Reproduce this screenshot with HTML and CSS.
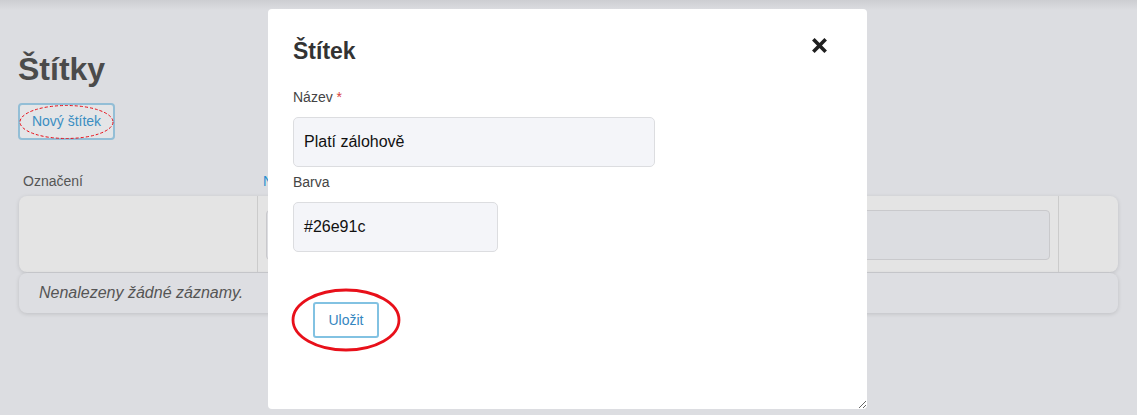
FILE: index.html
```html
<!DOCTYPE html>
<html lang="cs">
<head>
<meta charset="utf-8">
<title>Štítky</title>
<link rel="stylesheet" href="styles.css">
</head>
<body>
<div class="page">
  <h1 class="page-title">Štítky</h1>
  <div class="actions">
    <button class="btn-new">Nový štítek</button>
    <svg class="mark-dashed" width="95" height="36" viewBox="0 0 95 36"><ellipse cx="47.5" cy="18" rx="46.5" ry="16.5" fill="none" stroke="#e8101a" stroke-width="1" stroke-dasharray="3 2"/></svg>
  </div>
  <div class="table">
    <div class="thead">
      <div class="th th-first">Označení</div>
      <div class="th th-link">Název</div>
      <div class="th"></div>
    </div>
    <div class="row filter-row">
      <div class="cell"></div>
      <div class="cell cell-mid"><div class="filter-input"></div></div>
      <div class="cell cell-last"></div>
    </div>
    <div class="row empty-row">Nenalezeny žádné záznamy.</div>
  </div>
</div>

<div class="modal">
  <div class="modal-head">
    <h2 class="modal-title">Štítek</h2>
    <svg class="close" width="15" height="15" viewBox="0 0 15 15"><path d="M2.6 2.6 L12.4 12.4 M12.4 2.6 L2.6 12.4" stroke="#1f1f1f" stroke-width="3.6" stroke-linecap="square"/></svg>
  </div>
  <label class="field-label">Název <span class="req">*</span></label>
  <div class="input input-wide">Platí zálohově</div>
  <label class="field-label label-second">Barva</label>
  <div class="input input-narrow">#26e91c</div>
  <div class="save-wrap">
    <button class="btn-save">Uložit</button>
    <svg class="mark-solid" width="110" height="64" viewBox="0 0 110 64"><ellipse cx="55" cy="32" rx="53" ry="30" fill="none" stroke="#e8101a" stroke-width="2.8"/></svg>
  </div>
</div>
</body>
</html>
```

FILE: styles.css
```css
* { box-sizing: border-box; }

html, body {
  margin: 0;
  height: 100%;
}

body {
  font-family: "Liberation Sans", Arial, sans-serif;
  background: linear-gradient(to bottom, #cdced2 0, #dcdde1 10px) no-repeat, #dcdde1;
  color: #555;
  overflow: hidden;
}

.page {
  padding: 51px 19px 0 18px;
}

.page-title {
  margin: 0;
  font-size: 32px;
  line-height: 36px;
  font-weight: bold;
  color: #4b4b4b;
}

.actions {
  position: relative;
  margin-top: 16px;
  width: 97px;
}

.btn-new {
  display: block;
  font-family: inherit;
  font-size: 14px;
  line-height: 17px;
  padding: 8px 0;
  width: 97px;
  height: 37px;
  white-space: nowrap;
  text-align: center;
  border: 2px solid #93bed6;
  border-radius: 4px;
  background: #e4e5e7;
  color: #3b8ec2;
}

.mark-dashed {
  position: absolute;
  left: 1px;
  top: 1px;
}

.table {
  margin-top: 33px;
  margin-left: 1px;
}

.thead,
.filter-row {
  display: grid;
  grid-template-columns: 238px 1fr 60px;
}

.th {
  font-size: 14px;
  line-height: 16px;
  color: #555;
  border-left: 1px solid transparent;
  white-space: nowrap;
  overflow: hidden;
}

.th-first {
  padding-left: 4px;
  border-left: 0;
}

.th-link {
  padding-left: 5px;
  color: #2a8fd0;
}

.thead {
  padding-bottom: 7px;
}

.row {
  border-radius: 8px;
  box-shadow: 0 1px 4px rgba(0, 0, 0, 0.13);
}

.filter-row {
  height: 76px;
  background: #e4e4e4;
}

.cell-mid {
  border-left: 1px solid #cbcbcb;
  padding: 14px 8px 12px;
}

.cell-last {
  border-left: 1px solid #cbcbcb;
}

.filter-input {
  height: 50px;
  background: #dcdde1;
  border: 1px solid #c9c9cc;
  border-radius: 4px;
}

.empty-row {
  margin-top: 1px;
  height: 40px;
  background: #dddee2;
  padding-left: 20px;
  font-size: 16px;
  font-style: italic;
  line-height: 40px;
  color: #555;
}

/* modal */
.modal {
  position: absolute;
  left: 268px;
  top: 9px;
  width: 599px;
  height: 400px;
  background: #fff;
  border-radius: 4px;
  padding: 28px 40px 0 25px;
  resize: both;
  overflow: auto;
}

.modal-head {
  display: flex;
  justify-content: space-between;
  align-items: flex-start;
}

.modal-title {
  margin: 0;
  font-size: 23px;
  line-height: 28px;
  font-weight: bold;
  color: #333;
}

.close {
  display: block;
  margin-top: 1px;
}

.field-label {
  display: block;
  margin-top: 24px;
  font-size: 14px;
  line-height: 16px;
  color: #444;
}

.label-second {
  margin-top: 7px;
}

.req {
  color: #d9403a;
}

.input {
  margin-top: 12px;
  height: 50px;
  border: 1px solid #dcdde0;
  border-radius: 5px;
  background: #f4f5f9;
  padding: 0 10px;
  font-size: 16px;
  line-height: 48px;
  color: #111;
}

.input-wide { width: 362px; }
.input-narrow { width: 205px; }

.save-wrap {
  position: relative;
  margin-top: 50px;
  margin-left: 20px;
  width: 66px;
}

.btn-save {
  display: block;
  font-family: inherit;
  font-size: 14px;
  line-height: 16px;
  padding: 8px 0;
  width: 66px;
  height: 36px;
  white-space: nowrap;
  text-align: center;
  border: 2px solid #82c2e2;
  border-radius: 3px;
  background: #fff;
  color: #3586c0;
}

.mark-solid {
  position: absolute;
  left: -22px;
  top: -14px;
}
```
